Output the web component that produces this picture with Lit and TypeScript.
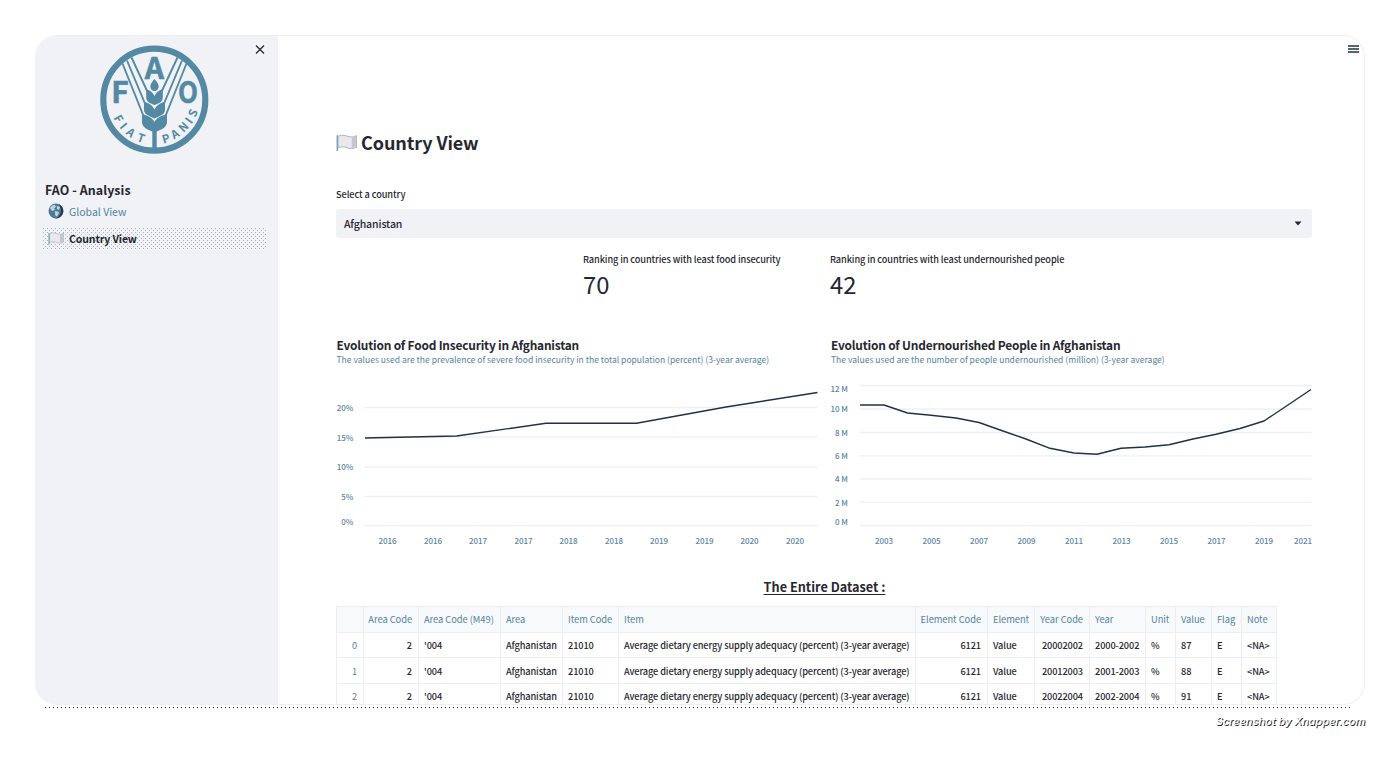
import { LitElement, html, css, svg } from "lit";
import { customElement } from "lit/decorators.js";

const COLS = ["", "Area Code", "Area Code (M49)", "Area", "Item Code", "Item", "Element Code", "Element", "Year Code", "Year", "Unit", "Value", "Flag", "Note"];
const WIDTHS = [27, 55, 82, 62, 56, 297, 72, 47, 55, 56, 30, 36, 30, 35];
const RIGHT = new Set([0, 1, 6, 8]);
const ITEM = "Average dietary energy supply adequacy (percent) (3-year average)";
const ROWS = [
  ["0", "2", "'004", "Afghanistan", "21010", ITEM, "6121", "Value", "20002002", "2000-2002", "%", "87", "E", "<NA>"],
  ["1", "2", "'004", "Afghanistan", "21010", ITEM, "6121", "Value", "20012003", "2001-2003", "%", "88", "E", "<NA>"],
  ["2", "2", "'004", "Afghanistan", "21010", ITEM, "6121", "Value", "20022004", "2002-2004", "%", "91", "E", "<NA>"],
];

interface Tick { at: number; label: string; }
interface Chart { line: string; grid: number[]; y: Tick[]; x: Tick[]; start: number; labelEnd: number; }

const FOOD: Chart = {
  start: 27.5,
  labelEnd: 16.3,
  line: "28,58 119.5,56 209,43.3 299.5,43.3 389,27 480.5,12.5",
  grid: [27.5, 57, 87, 116.5, 145.5],
  y: [{ at: 31, label: "20%" }, { at: 60.5, label: "15%" }, { at: 90, label: "10%" }, { at: 119.5, label: "5%" }, { at: 144.5, label: "0%" }],
  x: [50.5, 96, 141, 186.5, 231.5, 277, 322, 367.5, 412.5, 458].map((at, i) => ({ at, label: String(2016 + Math.floor(i / 2)) })),
};
const PEOPLE: Chart = {
  start: 29,
  labelEnd: 17,
  line: "29,25 53,25 76.5,33 100,35.3 125,38 148,42.5 172,51 195,59 219,68.3 243,73 266,74.2 290,68.3 314,67 338,64.7 362,59 385,54.3 409,48.5 433,41 457,25 480,9.5",
  grid: [5.5, 29, 52.5, 75.8, 99, 122.3, 145.5],
  y: [{ at: 11.5, label: "12 M" }, { at: 32, label: "10 M" }, { at: 55.5, label: "8 M" }, { at: 79, label: "6 M" }, { at: 102.3, label: "4 M" }, { at: 125.7, label: "2 M" }, { at: 144.5, label: "0 M" }],
  x: [53, 100.5, 148, 195.5, 243, 290.5, 338, 385.5, 433, 472].map((at, i) => ({ at, label: String(2003 + i * 2) })),
};

const flag = html`<svg class="flag" viewBox="0 0 20 16">
  <path d="M2 2C5 .5 8 1 11 2s6 1 8.500-.5v11C16 14 13 14 10.500 13S5 11.500 2 13z" fill="#e7e9ed" stroke="#b4bac3" stroke-width="1"/>
  <path d="M15 2.500c1.500.2 2.500 0 4-.5v10c-1.500.8-2.500 1-4 1z" fill="#c3c8d0"/>
  <path d="M1.200 1v15" stroke="#7294a8" stroke-width="1.200"/></svg>`;

@customElement("line-chart")
class LineChart extends LitElement {
  static properties = { data: { attribute: false }, heading: {}, note: {} };
  declare data: Chart;
  declare heading: string;
  declare note: string;
  static styles = css`
    :host { display: block; color: #262730; }
    .heading { font-size: 11.900px; letter-spacing: -.19px; font-weight: 700; line-height: 15px; white-space: nowrap; }
    .note { font-size: 8.560px; line-height: 13px; padding-top: 1px; color: #53839e; white-space: nowrap; }
    svg { display: block; width: 484px; height: 170px; margin-top: 14px; overflow: visible; }
    .tick { font-size: 8px; font-weight: 500; fill: #5c86a0; }
    .grid { stroke: #eff0f4; stroke-width: 1.300; }
    .line { fill: none; stroke: #1d3345; stroke-width: 1.400; stroke-linejoin: round; }
  `;
  render() {
    const d = this.data;
    return html`<div class="heading">${this.heading}</div><div class="note">${this.note}</div>
      <svg viewBox="0 0 484 170">
        ${d.grid.map((y) => svg`<line class="grid" x1=${d.start} x2="480.5" y1=${y} y2=${y}></line>`)}
        ${d.y.map((t) => svg`<text class="tick" x=${d.labelEnd} y=${t.at} text-anchor="end">${t.label}</text>`)}
        ${d.x.map((t) => svg`<text class="tick" x=${t.at} y="164" text-anchor="middle">${t.label}</text>`)}
        <polyline class="line" points=${d.line}></polyline>
      </svg>`;
  }
}

@customElement("fao-logo")
class FaoLogo extends LitElement {
  static styles = css`
    :host { display: block; width: 110px; height: 112px; }
    svg { display: block; }
    .letter { font: 700 30px "Noto Sans CJK SC", sans-serif; stroke: #5489a3; stroke-width: .6; }
    .motto { font: 700 11.500px "Noto Sans CJK SC", sans-serif; }
  `;
  render() {
    const motto: [string, number, number, number][] = [["F", 18.500, 74.500, 60], ["I", 23.500, 82, 50], ["A", 30.700, 88.500, 38], ["T", 41, 94, 20], ["P", 66, 94.500, -17], ["A", 75, 90, -31], ["N", 83.500, 83, -45], ["I", 89, 76.500, -55], ["S", 93, 69, -65]];
    return html`<svg width="110" height="112" viewBox="0 0 110 112" fill="#5489a3">
      <circle cx="54.300" cy="55.700" r="51" fill="none" stroke="#5489a3" stroke-width="6.200"/>
      <g stroke="#5489a3" stroke-width="1.900" fill="none">
        <path d="M22.500 19.500L43.500 72M27 16.500L46 62M31.500 13.500L48.500 50M86.500 19.500L65.500 72M82 16.500L63 62M77.500 13.500L60.500 50"/>
      </g>
      <path d="M54.500 35c-2.500 3-4.200 5-4.200 7.500 0 2.500 2 4.500 4.200 4.500s4.200-2 4.200-4.500c0-2.500-1.700-4.500-4.200-7.500z"/>
      <path d="M46.200 45.500c4 .5 7 3.500 8.300 6.500 1.300-3 4.300-6 8.300-6.500v8c0 4.500-4.500 6-8.300 7.500-3.800-1.500-8.300-3-8.300-7.500z"/>
      <path d="M44 58c5 .5 9 4 10.500 7.500C56 62 60 58.500 65 58v8c0 4.500-6 6.500-10.500 8.500C50 72.500 44 70.500 44 66z"/>
      <path d="M42 70.500c6 .5 11 4 12.500 7.500 1.500-3.500 6.500-7 12.500-7.500v8c0 4.500-6 7.500-10.300 9V106h-4.400V87.500C48 86 42 83 42 78.500z"/>
      <text class="letter" x="54.300" y="35" text-anchor="middle">A</text>
      <text class="letter" x="20" y="59" text-anchor="middle">F</text>
      <text class="letter" x="88" y="59" text-anchor="middle" textLength="20" lengthAdjust="spacingAndGlyphs">O</text>
      ${motto.map(([c, x, y, r]) => svg`<text class="motto" y="4.200" text-anchor="middle" transform=${`translate(${x} ${y}) rotate(${r})`}>${c}</text>`)}
    </svg>`;
  }
}

@customElement("app-root")
class AppRoot extends LitElement {
  static styles = css`
    :host { display: block; box-sizing: border-box; width: 1400px; height: 763px; padding: 35px 35px 0; background: #fff; color: #262730; font-family: "Noto Sans CJK SC", "Noto Sans", sans-serif; overflow: hidden; }
    * { box-sizing: border-box; }
    .window { display: flex; width: 1330px; height: 670px; border: 1px solid #eeeff2; border-left: 0; border-radius: 22px; overflow: hidden; }
    .dots { height: 1px; margin: 2px 14px 0 10px; background: repeating-linear-gradient(90deg, #262730 0 1px, transparent 1px 4px); }
    .side { width: 243px; background: #f0f2f6; flex: none; padding: 8px 12px 0 8px; display: flex; flex-direction: column; position: relative; }
    .close { position: absolute; left: 219px; top: 7px; }
    fao-logo { margin-left: 57px; }
    .brand { margin: 26px 0 0 2px; font-size: 12.400px; letter-spacing: .08px; line-height: 17px; font-weight: 700; }
    .nav { display: flex; align-items: center; height: 22px; margin-top: 1px; padding-left: 5px; gap: 5px; font-size: 10.500px; color: #53839e; }
    .nav svg { width: 16px; height: 16px; flex: none; }
    .nav.on { margin-top: 6px; padding-bottom: 2px; color: #1f2530; letter-spacing: -.12px; font-weight: 700; background-color: #f0f2f6; background-image: conic-gradient(at 1px 1px, transparent 270deg, #a9b0ba 0), conic-gradient(at 1px 1px, transparent 270deg, #a9b0ba 0); background-size: 4px 4px; background-position: 0 0, 2px 2px; }
    .nav .flag { height: 13px; }
    .main { flex: 1; position: relative; padding: 94px 0 0 58px; min-width: 0; }
    .menu { position: absolute; right: 5px; top: 9px; }
    h1 { display: flex; align-items: center; gap: 4px; margin: 0; font-size: 18px; letter-spacing: -.1px; line-height: 24px; font-weight: 700; }
    h1 .flag { width: 21px; height: 17px; }
    .label { margin-top: 33px; font-size: 9.200px; letter-spacing: -.08px; line-height: 14px; font-weight: 500; }
    .select { display: flex; align-items: center; justify-content: space-between; width: 976px; height: 29px; margin-top: 8px; padding: 0 10px 0 8px; background: #f0f2f6; border-radius: 3px; font-size: 10.500px; letter-spacing: -.1px; font-weight: 500; }
    .metrics { display: flex; margin: 14px 0 0 247px; }
    .metric { width: 247px; font-size: 9.200px; letter-spacing: -.1px; line-height: 14px; font-weight: 500; white-space: nowrap; }
    .value { font-size: 23.800px; letter-spacing: 0; line-height: 36px; font-weight: 400; }
    .charts { display: flex; gap: 10px; margin-top: 35px; padding-left: .5px; }
    .charts line-chart { width: 484.500px; }
    h2 { width: 977px; margin: 27px 0 9px; font-size: 12.700px; line-height: 20px; font-weight: 700; text-align: center; text-decoration: underline; text-underline-offset: 2px; }
    .table { display: grid; width: 941px; border-left: 1px solid #eceef2; border-top: 1px solid #eceef2; }
    .cell { display: flex; align-items: center; height: 25.700px; padding: 0 5px; border-right: 1px solid #eceef2; border-bottom: 1px solid #eceef2; font-size: 9.200px; letter-spacing: -.1px; font-weight: 500; white-space: nowrap; }
    .head { background: #f8f9fb; color: #53839e; font-size: 9.300px; letter-spacing: -.03px; font-weight: 400; }
    .idx { color: #53839e; font-weight: 400; }
    .right { justify-content: flex-end; padding-right: 6px; }
    .credit { margin-top: 6px; text-align: right; color: #fff; text-shadow: 1px 1px 0 #1c1e26; font: italic 500 11px/15px Inter, sans-serif; }
  `;
  render() {
    const cell = (t: string, i: number, k: string) => html`<div class="cell ${k} ${RIGHT.has(i) ? "right" : ""} ${i === 0 ? "idx" : ""}">${t}</div>`;
    return html`<div class="window">
      <aside class="side">
        <svg class="close" width="12" height="12" viewBox="0 0 12 12"><path d="M2 2.500l8 8M10 2.500l-8 8" stroke="#262730" stroke-width="1.300"/></svg>
        <fao-logo></fao-logo>
        <div class="brand">FAO - Analysis</div>
        <div class="nav"><svg viewBox="0 0 16 16"><circle cx="8" cy="8" r="7.500" fill="#4b7c98"/><path d="M11 1.200a7.500 7.500 0 0 1-4 14.200C12 14 14 9 12.500 5z" fill="#263746"/><path d="M2 5C3 3 5 2 7 2l1 2-2 1 1 2-3 1zM7 8l4 1-1 3-2 2-1-3zM9 3l3 1-1 3-2-1z" fill="#c5d4dc"/></svg>Global View</div>
        <div class="nav on">${flag}Country View</div>
      </aside>
      <main class="main">
        <svg class="menu" width="11" height="8" viewBox="0 0 11 8"><path d="M0 1h11M0 4h11M0 7h11" stroke="#1d3345" stroke-width="1.700"/></svg>
        <h1>${flag}Country View</h1>
        <div class="label">Select a country</div>
        <div class="select">Afghanistan<svg width="8" height="5" viewBox="0 0 8 5"><path d="M.5.5h7L4 4.500z" fill="#262730"/></svg></div>
        <div class="metrics">
          <div class="metric">Ranking in countries with least food insecurity<div class="value">70</div></div>
          <div class="metric">Ranking in countries with least undernourished people<div class="value">42</div></div>
        </div>
        <div class="charts">
          <line-chart .data=${FOOD} heading="Evolution of Food Insecurity in Afghanistan" note="The values used are the prevalence of severe food insecurity in the total population (percent) (3-year average)"></line-chart>
          <line-chart .data=${PEOPLE} heading="Evolution of Undernourished People in Afghanistan" note="The values used are the number of people undernourished (million) (3-year average)"></line-chart>
        </div>
        <h2>The Entire Dataset :</h2>
        <div class="table" style="grid-template-columns:${WIDTHS.map((w) => w + "px").join(" ")}">
          ${COLS.map((t, i) => cell(t, i, "head"))}
          ${ROWS.map((r) => r.map((t, i) => cell(t, i, "")))}
        </div>
      </main>
    </div>
    <div class="dots"></div>
    <div class="credit">Screenshot by Xnapper.com</div>`;
  }
}
